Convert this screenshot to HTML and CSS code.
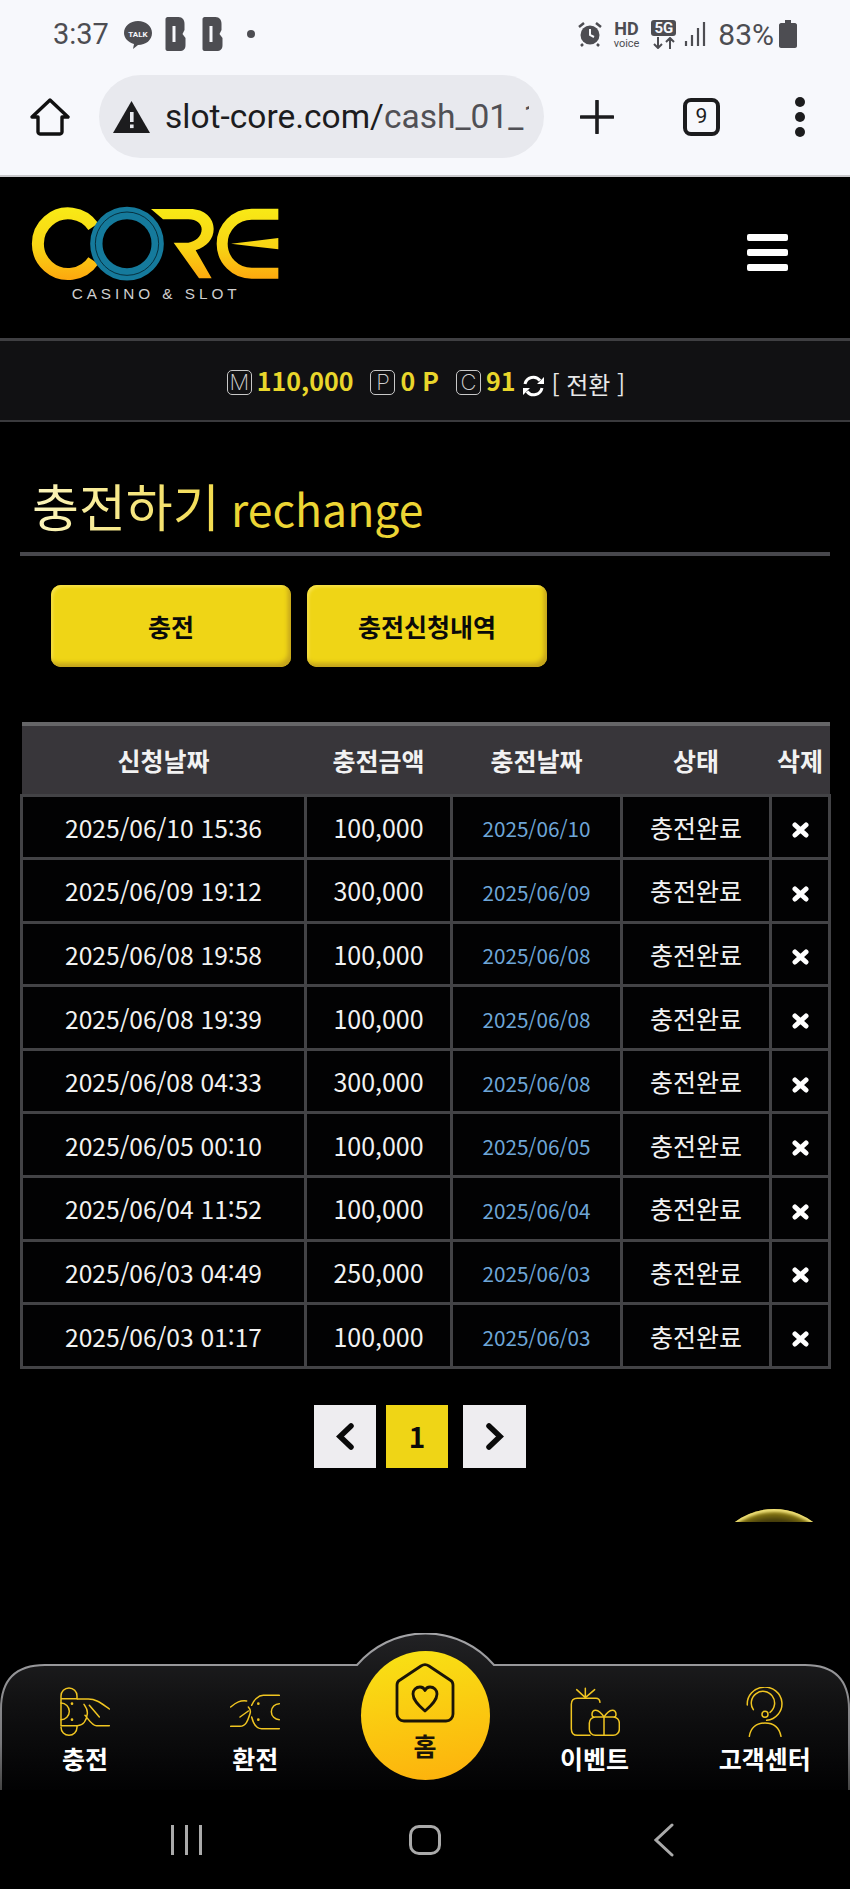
FILE: index.html
```html
<!DOCTYPE html>
<html lang="ko">
  <head>
    <meta charset="UTF-8" />
    <title>CORE - 충전하기</title>
    <link rel="stylesheet" href="styles.css">
  </head>
  <body>
    <div class="phone">
      <div class="browser">
        <div class="status-bar">
          <div class="status-left">
            <span class="time">3:37</span>
            <svg class="talk" width="30" height="30" viewBox="0 0 30 30">
              <path d="M15 2c8 0 14 5 14 12s-6 12-14 12l-5 4 1-5C5 23 1 19 1 14 1 7 7 2 15 2z" fill="#4d4d52"/>
              <text x="15" y="18" text-anchor="middle" class="talk-text">TALK</text>
            </svg>
            <svg class="app-b" width="22" height="34" viewBox="0 0 21 34">
              <path d="M2 0h11c4 0 6 3 6 7v6l-2 4 3 4v7c0 4-2 6-6 6H2c-1 0-2-1-2-2V2c0-1 1-2 2-2z" fill="#4d4d52"/>
              <rect x="7" y="9" width="3" height="16" fill="#f7f8fc"/>
            </svg>
            <svg class="app-b" width="22" height="34" viewBox="0 0 21 34">
              <path d="M2 0h11c4 0 6 3 6 7v6l-2 4 3 4v7c0 4-2 6-6 6H2c-1 0-2-1-2-2V2c0-1 1-2 2-2z" fill="#4d4d52"/>
              <rect x="7" y="9" width="3" height="16" fill="#f7f8fc"/>
            </svg>
            <span class="dot"></span>
          </div>
          <div class="status-right">
            <svg width="24" height="26" viewBox="0 0 24 26">
              <circle cx="12" cy="14" r="9.5" fill="#4d4d52"/>
              <path d="M12 8v6l4 2" stroke="#f7f8fc" stroke-width="2" fill="none"/>
              <path d="M1 6l5-4M23 6l-5-4M5 23l-2 2M19 23l2 2" stroke="#4d4d52" stroke-width="2.5"/>
            </svg>
            <span class="hd"><b>HD</b><i>voice</i></span>
            <span class="five-g"><b>5G</b><svg width="24" height="12" viewBox="0 0 24 12"><path d="M6 0v11M2 7l4 4 4-4M18 12V1M14 5l4-4 4 4" stroke="#4d4d52" stroke-width="2" fill="none"/></svg></span>
            <svg class="signal" width="22" height="26" viewBox="0 0 22 26">
              <path d="M2 20v5M8 14v11M14 7v18M20 1v24" stroke="#4d4d52" stroke-width="2.2"/>
            </svg>
            <span class="battery-num">83%</span>
            <svg width="18" height="28" viewBox="0 0 18 28">
              <path d="M6 0h6v3h4c1 0 2 1 2 2v21c0 1-1 2-2 2H2c-1 0-2-1-2-2V5c0-1 1-2 2-2h4z" fill="#4d4d52"/>
            </svg>
          </div>
        </div>

        <div class="toolbar">
          <svg class="tool-home" width="40" height="38" viewBox="0 0 40 38">
            <path d="M2 19L20 2l18 17h-6v15c0 1-1 2-2 2H10c-1 0-2-1-2-2V19z" fill="none" stroke="#111" stroke-width="3.4" stroke-linejoin="round"/>
          </svg>
          <div class="url-pill">
            <svg width="37" height="32" viewBox="0 0 37 32">
              <path d="M18.500 0L37 32H0z" fill="#1c1c1e"/>
              <rect x="17" y="11" width="3.6" height="10" fill="#e8e9ee"/>
              <rect x="17" y="23.500" width="3.6" height="3.6" fill="#e8e9ee"/>
            </svg>
            <span class="url-text">slot-core.com/<span class="url-path">cash_01_1</span></span>
          </div>
          <svg class="tool-plus" width="34" height="34" viewBox="0 0 34 34">
            <path d="M17 1v32M1 17h32" stroke="#1c1c1e" stroke-width="3.6" stroke-linecap="round"/>
          </svg>
          <span class="tab-count">9</span>
          <span class="tool-menu"><i></i><i></i><i></i></span>
        </div>
      </div>

      <header class="site-header">
        <svg class="logo" width="260" height="105" viewBox="0 0 780 315" role="img" aria-label="CORE CASINO &amp; SLOT">
          <defs>
            <linearGradient id="logoGold" gradientUnits="userSpaceOnUse" x1="0" y1="22" x2="0" y2="240">
              <stop offset="0" stop-color="#f8ea16"/>
              <stop offset="0.55" stop-color="#f8d414"/>
              <stop offset="1" stop-color="#fda70e"/>
            </linearGradient>
          </defs>
          <path d="M205 80A91 91 0 1 0 205 182" fill="none" stroke="url(#logoGold)" stroke-width="36"/>
          <circle cx="306" cy="131" r="92" fill="none" stroke="#157a9c" stroke-width="37"/>
          <circle cx="306" cy="131" r="95" fill="none" stroke="#04222c" stroke-width="2.5"/>
          <path d="M378 27H495C540 27 566 55 566 87C566 116 546 140 512 151L560 235H522L446 128H490C512 124 530 110 530 88C530 72 515 58 490 58H414Z" fill="url(#logoGold)"/>
          <path d="M760 43H680A88 88 0 0 0 680 220H760" fill="none" stroke="url(#logoGold)" stroke-width="33"/>
          <path d="M618 131L760 114V148Z" fill="url(#logoGold)"/>
          <text x="140" y="297" class="logo-sub" textLength="495">CASINO &amp; SLOT</text>
        </svg>
        <button class="hamburger" aria-label="menu"><i></i><i></i><i></i></button>
      </header>

      <div class="balance-bar">
        <span class="coin-box">M</span><span class="amount">110,000</span>
        <span class="coin-box gap-left">P</span><span class="amount">0 P</span>
        <span class="coin-box gap-left">C</span><span class="amount">91</span>
        <svg class="refresh" width="23" height="22" viewBox="0 0 23 22">
          <path d="M3 9A8.500 8.500 0 0 1 18 5.500M20 13A8.500 8.500 0 0 1 5 16.500" fill="none" stroke="#fff" stroke-width="3"/>
          <path d="M22 2v7h-7zM1 20v-7h7z" fill="#fff"/>
        </svg>
        <span class="swap">[ 전환 ]</span>
      </div>

      <main class="content">
        <h2 class="page-title"><span class="title-ko">충전하기</span> <span class="title-en">rechange</span></h2>

        <div class="tabs">
          <a class="tab-btn">충전</a>
          <a class="tab-btn">충전신청내역</a>
        </div>

        <table class="cash-table">
          <colgroup>
            <col class="col-req" /><col class="col-amount" /><col class="col-date" /><col class="col-state" /><col class="col-del" />
          </colgroup>
          <thead>
            <tr><th>신청날짜</th><th>충전금액</th><th>충전날짜</th><th>상태</th><th>삭제</th></tr>
          </thead>
          <tbody>
            <tr><td>2025/06/10 15:36</td><td>100,000</td><td class="blue">2025/06/10</td><td>충전완료</td><td><svg class="del" width="17" height="16" viewBox="0 0 17 16"><path d="M3 3l11 10M14 3L3 13" stroke="#fff" stroke-width="5" stroke-linecap="round"/></svg></td></tr>
            <tr><td>2025/06/09 19:12</td><td>300,000</td><td class="blue">2025/06/09</td><td>충전완료</td><td><svg class="del" width="17" height="16" viewBox="0 0 17 16"><path d="M3 3l11 10M14 3L3 13" stroke="#fff" stroke-width="5" stroke-linecap="round"/></svg></td></tr>
            <tr><td>2025/06/08 19:58</td><td>100,000</td><td class="blue">2025/06/08</td><td>충전완료</td><td><svg class="del" width="17" height="16" viewBox="0 0 17 16"><path d="M3 3l11 10M14 3L3 13" stroke="#fff" stroke-width="5" stroke-linecap="round"/></svg></td></tr>
            <tr><td>2025/06/08 19:39</td><td>100,000</td><td class="blue">2025/06/08</td><td>충전완료</td><td><svg class="del" width="17" height="16" viewBox="0 0 17 16"><path d="M3 3l11 10M14 3L3 13" stroke="#fff" stroke-width="5" stroke-linecap="round"/></svg></td></tr>
            <tr><td>2025/06/08 04:33</td><td>300,000</td><td class="blue">2025/06/08</td><td>충전완료</td><td><svg class="del" width="17" height="16" viewBox="0 0 17 16"><path d="M3 3l11 10M14 3L3 13" stroke="#fff" stroke-width="5" stroke-linecap="round"/></svg></td></tr>
            <tr><td>2025/06/05 00:10</td><td>100,000</td><td class="blue">2025/06/05</td><td>충전완료</td><td><svg class="del" width="17" height="16" viewBox="0 0 17 16"><path d="M3 3l11 10M14 3L3 13" stroke="#fff" stroke-width="5" stroke-linecap="round"/></svg></td></tr>
            <tr><td>2025/06/04 11:52</td><td>100,000</td><td class="blue">2025/06/04</td><td>충전완료</td><td><svg class="del" width="17" height="16" viewBox="0 0 17 16"><path d="M3 3l11 10M14 3L3 13" stroke="#fff" stroke-width="5" stroke-linecap="round"/></svg></td></tr>
            <tr><td>2025/06/03 04:49</td><td>250,000</td><td class="blue">2025/06/03</td><td>충전완료</td><td><svg class="del" width="17" height="16" viewBox="0 0 17 16"><path d="M3 3l11 10M14 3L3 13" stroke="#fff" stroke-width="5" stroke-linecap="round"/></svg></td></tr>
            <tr><td>2025/06/03 01:17</td><td>100,000</td><td class="blue">2025/06/03</td><td>충전완료</td><td><svg class="del" width="17" height="16" viewBox="0 0 17 16"><path d="M3 3l11 10M14 3L3 13" stroke="#fff" stroke-width="5" stroke-linecap="round"/></svg></td></tr>
          </tbody>
        </table>

        <div class="pager">
          <a class="page-btn"><svg width="19" height="27" viewBox="0 0 19 27"><path d="M15 3L4 13.500l11 10.500" fill="none" stroke="#0a0a0a" stroke-width="5.500" stroke-linecap="round"/></svg></a>
          <a class="page-btn active">1</a>
          <a class="page-btn next"><svg width="19" height="27" viewBox="0 0 19 27"><path d="M4 3l11 10.500L4 24" fill="none" stroke="#0a0a0a" stroke-width="5.500" stroke-linecap="round"/></svg></a>
        </div>
      </main>

      <div class="top-peek"><span></span></div>

      <nav class="bottom-nav">
        <svg class="nav-shape" width="850" height="157" viewBox="0 0 850 157">
          <defs>
            <linearGradient id="navFill" x1="0" y1="0" x2="0" y2="1">
              <stop offset="0" stop-color="#222224"/>
              <stop offset="0.45" stop-color="#111112"/>
              <stop offset="1" stop-color="#020203"/>
            </linearGradient>
            <linearGradient id="navLine" x1="0" y1="0" x2="0" y2="1">
              <stop offset="0" stop-color="#a5a5a8"/>
              <stop offset="0.7" stop-color="#77777a"/>
              <stop offset="1" stop-color="#444"/>
            </linearGradient>
          </defs>
          <path d="M1 157V76Q1 32 45 32H357A90 90 0 0 1 494 32H805Q849 32 849 76V157" fill="url(#navFill)" stroke="url(#navLine)" stroke-width="2"/>
        </svg>

        <a class="nav-item">
          <svg class="nav-icon" width="50" height="50" viewBox="0 0 150 150">
            <path d="M3 116V27a24 24 0 0 1 48 0v8H3M3 116h48v5a24 24 0 0 1-48 0"/>
            <path d="M3 48a24 24 0 0 1 0 50"/>
            <path d="M52 36h33c25 0 40 14 63 30M148 116h-38c-15 0-25-21-35-31M52 116c18 0 28-16 30-36 1-10-4-20-10-28M88 55l30 35"/>
            <circle cx="36" cy="50" r="4" class="dot-fill"/><circle cx="36" cy="98" r="4" class="dot-fill"/>
          </svg>
          <span>충전</span>
        </a>
        <a class="nav-item">
          <svg class="nav-icon" width="50" height="50" viewBox="0 0 150 150">
            <path d="M148 25h-48c-15 0-30 15-35 30M148 125H95c-15 0-25-15-30-35"/>
            <path d="M2 118h28c20 0 25-23 30-38 3-9 0-15-5-20M2 60c18-15 28-20 48-18M30 90l25-18"/>
            <path d="M148 50a24 24 0 0 0 0 48"/>
            <circle cx="85" cy="50" r="4" class="dot-fill"/><circle cx="85" cy="98" r="4" class="dot-fill"/>
          </svg>
          <span>환전</span>
        </a>
        <a class="nav-home">
          <svg width="60" height="62" viewBox="0 0 60 62">
            <path d="M5 18L26 4c3-2 5-2 8 0l21 14c2 1 3 3 3 5v29c0 4-3 7-7 7H9c-4 0-7-3-7-7V23c0-2 1-4 3-5z" fill="none" stroke="#1a1408" stroke-width="2.800"/>
            <path d="M30 49C23 43 18 38 18 32c0-4 3-7 7-7 2.500 0 4 1 5 3.500 1-2.500 2.500-3.500 5-3.500 4 0 7 3 7 7 0 6-5 11-12 17z" fill="none" stroke="#1a1408" stroke-width="2.800" stroke-linejoin="round"/>
          </svg>
          <span>홈</span>
        </a>
        <a class="nav-item">
          <svg class="nav-icon" width="50" height="50" viewBox="0 0 150 150">
            <path d="M90 46c-1-8-5-12-12-12H22C10 34 4 40 4 52v73c0 13 6 20 18 20h38"/>
            <path d="M46 32V4M46 32L20 8M46 32L74 8"/>
            <rect x="58" y="90" width="90" height="55" rx="18"/>
            <path d="M102 90c-18-28-36-24-36-8 0 5 2 8 5 8M102 90c18-28 36-24 36-8 0 5-2 8-5 8M102 90v55"/>
          </svg>
          <span>이벤트</span>
        </a>
        <a class="nav-item">
          <svg class="nav-icon" width="38" height="50" viewBox="0 0 114 150">
            <path d="M4 54A52 50 0 1 1 62 100"/>
            <path d="M22 68A35 35 0 1 1 72 76"/>
            <circle cx="57" cy="82" r="9"/>
            <path d="M10 148c4-26 22-40 47-40s43 14 48 40"/>
          </svg>
          <span>고객센터</span>
        </a>
      </nav>

      <div class="android-nav">
        <span class="and-item"><i class="bars"></i></span>
        <span class="and-item"><i class="round-home"></i></span>
        <span class="and-item">
          <svg width="20" height="34" viewBox="0 0 20 34"><path d="M18 2L2 17l16 15" fill="none" stroke="#aaa" stroke-width="3" stroke-linecap="round"/></svg>
        </span>
      </div>
    </div>
  </body>
</html>
```

FILE: styles.css
```css
* {
  box-sizing: border-box;
}

body {
  margin: 0;
  background-color: #000;
  color: #fff;
  font-family: "Noto Sans CJK KR", "Noto Sans", sans-serif;
}

a {
  color: inherit;
  text-decoration: none;
}

.phone {
  position: relative;
  width: 850px;
  height: 1889px;
  overflow: hidden;
  display: flex;
  flex-direction: column;
}

/* phone + browser chrome */
.browser {
  background-color: #f7f8fc;
  border-bottom: 2px solid #c9c9cc;
  height: 177px;
  font-family: Roboto, sans-serif;
}

.status-bar {
  height: 68px;
  padding: 0 53px 0 53px;
  display: flex;
  justify-content: space-between;
  align-items: center;
  color: #4d4d52;
}

.status-left,
.status-right {
  display: flex;
  align-items: center;
}

.time {
  font-size: 29px;
  width: 70px;
}

.talk {
  margin-right: 12px;
}

.talk-text {
  font-size: 8px;
  font-weight: 700;
  fill: #f7f8fc;
  font-family: Roboto, sans-serif;
}

.app-b {
  margin-right: 15px;
}

.dot {
  width: 8px;
  height: 8px;
  margin-left: 8px;
  border-radius: 50%;
  background-color: #4d4d52;
}

.status-right {
  gap: 12px;
}

.signal {
  margin-left: -4px;
}

.hd {
  display: flex;
  flex-direction: column;
  align-items: center;
  line-height: 1;
}

.hd b {
  font-size: 18px;
}

.hd i {
  font-style: normal;
  font-size: 11px;
}

.five-g {
  display: flex;
  flex-direction: column;
  align-items: center;
  gap: 1px;
}

.five-g b {
  background-color: #4d4d52;
  color: #f7f8fc;
  font-size: 15px;
  line-height: 16px;
  padding: 0 3px;
  border-radius: 3px;
}

.battery-num {
  font-size: 30px;
  margin-right: -7px;
}

.toolbar {
  display: flex;
  align-items: center;
  padding-left: 30px;
  padding-bottom: 10px;
  height: 107px;
}

.tool-home {
  margin-right: 29px;
}

.url-pill {
  width: 445px;
  height: 83px;
  border-radius: 42px;
  background-color: #e8e9ee;
  padding-left: 14px;
  display: flex;
  align-items: center;
  gap: 15px;
  overflow: hidden;
}

.url-text {
  font-size: 33.5px;
  color: #1c1c1e;
  width: 364px;
  flex: none;
  overflow: hidden;
  white-space: nowrap;
}

.url-path {
  color: #505055;
}

.tool-plus {
  margin-left: 36px;
  margin-right: 69px;
}

.tab-count {
  width: 37px;
  height: 38px;
  border: 4px solid #1c1c1e;
  border-radius: 8px;
  font-size: 21px;
  line-height: 29px;
  text-align: center;
  color: #1c1c1e;
}

.tool-menu {
  margin-left: 75px;
  display: flex;
  flex-direction: column;
  gap: 5px;
}

.tool-menu i {
  width: 10px;
  height: 10px;
  border-radius: 50%;
  background-color: #1c1c1e;
}

/* site header */
.site-header {
  height: 161px;
  padding: 23px 62px 0 25px;
  display: flex;
  justify-content: space-between;
  align-items: flex-start;
  background-color: #000;
}

.logo {
  display: block;
}

.logo-sub {
  font-family: "Liberation Sans", sans-serif;
  font-size: 46px;
  fill: #cfcfcf;
}

.hamburger {
  margin-top: 34px;
  padding: 0;
  border: none;
  background: none;
  display: flex;
  flex-direction: column;
  gap: 8px;
}

.hamburger i {
  display: block;
  width: 41px;
  height: 7px;
  border-radius: 2px;
  background-color: #fff;
}

.balance-bar {
  height: 84px;
  border-top: 3px solid #3f3f42;
  border-bottom: 2px solid #3a3a3d;
  background-color: #111113;
  display: flex;
  align-items: center;
  justify-content: center;
  padding-left: 2px;
  font-size: 25px;
}

.coin-box {
  width: 25px;
  height: 25px;
  margin-top: 4px;
  margin-right: 5px;
  border: 1px solid #c8c8c8;
  border-radius: 5px;
  font-family: Inter, sans-serif;
  font-weight: 200;
  font-size: 22px;
  line-height: 22px;
  text-align: center;
  color: #d0d0d0;
}

.gap-left {
  margin-left: 17px;
}

.amount {
  color: #e9d62b;
  font-weight: 700;
  line-height: 1;
}

.refresh {
  margin: 10px 6px 0 7px;
}

.swap {
  color: #e8e8e8;
  font-size: 24px;
  line-height: 1;
  margin-top: 6px;
  white-space: nowrap;
}

/* content */
.content {
  padding: 0 20px;
}

.page-title {
  margin: 53px 0 0;
  padding-bottom: 21px;
  border-bottom: 4px solid #47474c;
  height: 81px;
  padding-left: 12px;
  font-weight: 400;
  font-size: 51px;
  line-height: 60px;
  word-spacing: -3px;
  white-space: nowrap;
}

.title-ko {
  background-image: linear-gradient(90deg, #fbf5bf, #f2da4c);
  -webkit-background-clip: text;
  background-clip: text;
  color: transparent;
}

.title-en {
  color: #ecd534;
  font-size: 44.5px;
}

.tabs {
  margin-top: 29px;
  padding-left: 31px;
  display: flex;
  gap: 16px;
}

.tab-btn {
  width: 240px;
  height: 82px;
  border-radius: 10px;
  background-color: #efd516;
  box-shadow: inset -3px -4px 4px #c4a41c, inset 2px 2px 3px #f7e24a;
  color: #0a0a0a;
  font-size: 25px;
  font-weight: 700;
  line-height: 82px;
  text-align: center;
}

.cash-table {
  margin-top: 55px;
  width: 808px;
  table-layout: fixed;
  border-collapse: collapse;
  font-size: 25px;
}

.col-req { width: 284px; }
.col-amount { width: 146px; }
.col-date { width: 170px; }
.col-state { width: 149px; }
.col-del { width: 59px; }

.cash-table th {
  height: 71px;
  padding: 0;
  background-color: #38363a;
  border-top: 4px solid #666668;
  font-size: 25px;
  font-weight: 700;
  color: #f2f2f2;
}

.cash-table td {
  height: 63.6px;
  padding: 0;
  border: 3px solid #434346;
  background-color: #020203;
  text-align: center;
  color: #f2f2f2;
}

.cash-table td:first-child {
  font-size: 24.6px;
}

.cash-table .blue {
  padding-top: 3px;
  color: #6ea6d8;
  font-size: 20.7px;
}

.del {
  display: block;
  margin: 7px auto 0;
}

.pager {
  margin: 36px 0 0 294px;
  display: flex;
  gap: 10px;
}

.page-btn {
  width: 62px;
  height: 63px;
  background-color: #eeedf0;
  display: flex;
  align-items: center;
  justify-content: center;
  color: #0a0a0a;
  font-size: 28px;
  font-weight: 700;
}

.page-btn.active {
  background-color: #efd516;
}

.page-btn.next {
  margin-left: 5px;
  width: 63px;
}

.top-peek {
  position: absolute;
  left: 735px;
  top: 1509px;
  width: 78px;
  height: 13px;
  overflow: hidden;
}

.top-peek span {
  display: block;
  width: 130px;
  height: 130px;
  margin-left: -26px;
  border-radius: 50%;
  background-color: #3f370a;
  box-shadow: inset 0 3px 3px #f1e27a, inset 0 8px 6px #8a7a14;
}

/* bottom nav */
.bottom-nav {
  position: relative;
  margin-top: auto;
  height: 157px;
  display: flex;
}

.nav-shape {
  position: absolute;
  left: 0;
  top: 0;
}

.nav-item {
  position: relative;
  flex: 1;
  padding-top: 54px;
  display: flex;
  flex-direction: column;
  align-items: center;
  font-size: 25px;
  font-weight: 700;
  line-height: 1;
}

.nav-item span {
  margin-top: 9px;
}

.nav-icon {
  display: block;
  fill: none;
  stroke: #f0c521;
  stroke-width: 4.500;
  stroke-linecap: round;
}

.nav-icon .dot-fill {
  fill: #f0c521;
  stroke: none;
}

.nav-home {
  position: relative;
  flex: none;
  width: 129px;
  height: 129px;
  margin: 18px 20px 0;
  padding-top: 11px;
  border-radius: 50%;
  background-image: linear-gradient(170deg, #f8e315, #fdb00c);
  display: flex;
  flex-direction: column;
  align-items: center;
  color: #1a1408;
  font-size: 25px;
  font-weight: 700;
  line-height: 1;
}

.nav-home svg {
  display: block;
}

.nav-home span {
  margin-top: 9px;
}

.android-nav {
  height: 99px;
  background-color: #000;
  display: flex;
  align-items: center;
  justify-content: center;
  gap: 179px;
}

.and-item {
  width: 60px;
  display: flex;
  justify-content: center;
}

.bars {
  width: 31px;
  height: 30px;
  background-image: linear-gradient(#aaa, #aaa), linear-gradient(#aaa, #aaa), linear-gradient(#aaa, #aaa);
  background-size: 3px 30px;
  background-position: 0 0, 14px 0, 28px 0;
  background-repeat: no-repeat;
}

.round-home {
  width: 32px;
  height: 30px;
  border: 3px solid #aaa;
  border-radius: 10px;
}
```
